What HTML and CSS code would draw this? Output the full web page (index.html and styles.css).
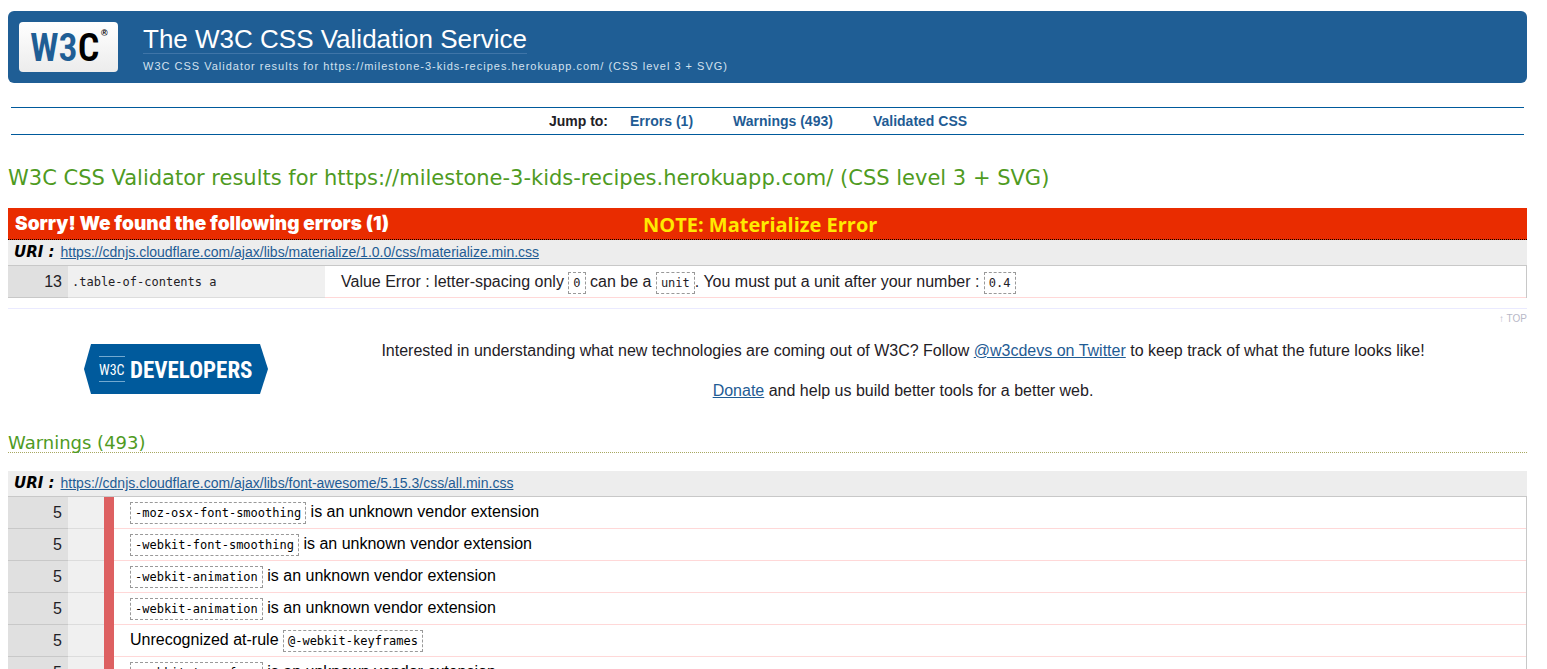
FILE: index.html
```html
<!DOCTYPE html>
<html lang="en">
<head>
<meta charset="utf-8">
<title>W3C CSS Validator results</title>
<link rel="stylesheet" href="styles.css">
</head>
<body>
<header class="banner" id="top">
  <a class="logo" href="#top" aria-label="W3C">
    <svg width="99" height="50" viewBox="0 0 99 50" aria-hidden="true">
      <text class="mark" x="11" y="39"><tspan class="mark-blue">W3</tspan><tspan>C</tspan></text>
      <text class="reg" x="82" y="14">®</text>
    </svg>
  </a>
  <div>
    <h1 class="title"><a href="#top">The W3C CSS Validation Service</a></h1>
    <p class="tagline">W3C CSS Validator results for https://milestone-3-kids-recipes.herokuapp.com/ (CSS level 3 + SVG)</p>
  </div>
</header>
<nav class="jump">
  <strong>Jump to:</strong>
  <a href="#errors">Errors (1)</a>
  <a href="#warnings">Warnings (493)</a>
  <a href="#css">Validated CSS</a>
</nav>
<main>
  <h2 class="results">W3C CSS Validator results for https://milestone-3-kids-recipes.herokuapp.com/ (CSS level 3 + SVG)</h2>
  <section id="errors">
    <div class="error-bar">
      <h3>Sorry! We found the following errors (1)</h3>
      <span class="note">NOTE: Materialize Error</span>
    </div>
    <h4 class="uri"><span>URI :</span><a href="#errors">https://cdnjs.cloudflare.com/ajax/libs/materialize/1.0.0/css/materialize.min.css</a></h4>
    <table class="report">
      <tr><td class="line">13</td><td class="context wide">.table-of-contents a</td><td class="message">Value Error : letter-spacing only <code>0</code> can be a <code>unit</code>. You must put a unit after your number : <code>0.4</code></td></tr>
    </table>
  </section>
  <p class="backtop"><a href="#top">↑ TOP</a></p>
  <section class="promo">
    <a class="developers" href="#top" aria-label="W3C Developers">
      <svg width="184" height="50" viewBox="0 0 184 50" aria-hidden="true">
        <path d="M7 0H176L184 25L176 50H7L0 25Z" fill="#005a9c"/>
        <path d="M15 12.5H41M15 37.500H41" stroke="#73a9d0"/>
        <text class="dev-w3c" x="15" y="31">W3C</text>
        <text class="dev-name" x="46" y="34">DEVELOPERS</text>
      </svg>
    </a>
    <div class="promo-text">
      <p>Interested in understanding what new technologies are coming out of W3C? Follow <a href="#twitter">@w3cdevs on Twitter</a> to keep track of what the future looks like!</p>
      <p><a href="#donate">Donate</a> and help us build better tools for a better web.</p>
    </div>
  </section>
  <section id="warnings">
    <h3 class="warnings-title">Warnings (493)</h3>
    <h4 class="uri"><span>URI :</span><a href="#warnings">https://cdnjs.cloudflare.com/ajax/libs/font-awesome/5.15.3/css/all.min.css</a></h4>
    <table class="report warn">
      <tr><td class="line">5</td><td class="context"></td><td class="level"></td><td class="message"><code>-moz-osx-font-smoothing</code> is an unknown vendor extension</td></tr>
      <tr><td class="line">5</td><td class="context"></td><td class="level"></td><td class="message"><code>-webkit-font-smoothing</code> is an unknown vendor extension</td></tr>
      <tr><td class="line">5</td><td class="context"></td><td class="level"></td><td class="message"><code>-webkit-animation</code> is an unknown vendor extension</td></tr>
      <tr><td class="line">5</td><td class="context"></td><td class="level"></td><td class="message"><code>-webkit-animation</code> is an unknown vendor extension</td></tr>
      <tr><td class="line">5</td><td class="context"></td><td class="level"></td><td class="message">Unrecognized at-rule <code>@-webkit-keyframes</code></td></tr>
      <tr><td class="line">5</td><td class="context"></td><td class="level"></td><td class="message"><code>-webkit-transform</code> is an unknown vendor extension</td></tr>
    </table>
  </section>
</main>
</body>
</html>
```
FILE: styles.css
```css
* { box-sizing: border-box; }
body {
  margin: 11px 20px 0 8px;
  background: #fff;
  color: #1f2126;
  font: 16px/24px "Liberation Sans", Arial, sans-serif;
}
h1, h2, h3, h4, p { margin: 0; font-weight: normal; }
a { color: #1f5c94; }

.banner {
  display: flex;
  gap: 25px;
  padding: 11px;
  border-radius: 6px;
  background: #1f5e95;
}
.logo {
  display: block;
  height: 50px;
  border-radius: 4px;
  background: linear-gradient(#fff, #ececec);
}
.logo svg, .developers svg { display: block; }
.mark { font: 600 38px "Roboto Condensed", "Liberation Sans", sans-serif; fill: #000; }
.mark-blue { fill: #1f5e95; }
.reg { font: bold 9px "Liberation Sans", sans-serif; }
.title { font-size: 26px; line-height: 28px; }
.title a {
  display: block;
  width: fit-content;
  padding-top: 3px;
  border-bottom: 1px solid #3f75a8;
  color: #fff;
  text-decoration: none;
}
.tagline {
  margin-top: 6px;
  color: #d3e1ef;
  font-size: 11px;
  line-height: 12px;
  letter-spacing: 1px;
}

.jump {
  display: flex;
  justify-content: center;
  margin: 24px 3px 0;
  padding: 0 19px 0 0;
  border: solid #005a9c;
  border-width: 1px 0;
  font-size: 14px;
  font-weight: bold;
  line-height: 26px;
}
.jump strong { margin-right: 22px; color: #1f2126; }
.jump a { margin-right: 40px; text-decoration: none; }
.jump a:last-child { margin-right: 0; }

.results {
  margin: 28px 0 15px;
  color: #4f9b1f;
  font: 21px/30px "DejaVu Sans", Verdana, sans-serif;
}
.error-bar {
  display: grid;
  grid-template-columns: 628px 1fr;
  align-items: center;
  height: 32px;
  padding-left: 7px;
  border-bottom: 1px dotted #000;
  background: #e92c00;
}
.error-bar h3 { color: #fff; font: 900 19px/30px "Inter", sans-serif; }
.note { padding-top: 2px; color: #ffea00; font: 700 20px/30px "Open Sans", sans-serif; }

.uri {
  display: flex;
  gap: 6px;
  padding-left: 6px;
  border-bottom: 1px solid #c8c8c8;
  background: #ededed;
  font-size: 14px;
  line-height: 25px;
}
.uri span { color: #000; font: italic bold 15px/25px "DejaVu Sans", sans-serif; }

.report { width: 100%; border-collapse: separate; border-spacing: 0; border-right: 1px solid #c8c8c8; }
.report td { height: 32px; padding: 0; }
.report .line {
  width: 60px;
  padding-right: 6px;
  border-bottom: 1px solid #c8c8c8;
  background: #e0e0e0;
  text-align: right;
}
.report .context {
  width: 36px;
  border-bottom: 1px solid #dcdcdc;
  background: #f0f0f0;
  font: 12px/20px "DejaVu Sans Mono", Consolas, monospace;
}
.report .wide { width: 257px; padding-left: 4px; }
.report .level { width: 10px; background: #dd6061; }
.report .message { padding-left: 16px; border-bottom: 1px solid #ffd8d8; }
.warn { color: #000; }
.warn .line { color: #1f2126; }
.warn .message { padding-bottom: 2px; }
code {
  padding: 3px 4px;
  border: 1px dashed #999;
  font: 12px/14px "DejaVu Sans Mono", Consolas, monospace;
}

.backtop {
  margin-top: 10px;
  border-top: 1px solid #eaeaff;
  font-size: 10px;
  line-height: 20px;
  text-align: right;
}
.backtop a { color: #b8b8c8; text-decoration: none; }

.promo { display: flex; align-items: flex-start; margin-top: 10px; }
.developers { width: 271px; padding: 5px 0 0 76px; }
.promo-text { flex: 1; text-align: center; }
.promo-text p { margin-bottom: 16px; }
.dev-w3c { fill: #fff; font: 14px "Roboto Condensed", "Liberation Sans", sans-serif; }
.dev-name { fill: #fff; font: bold 23px "Roboto Condensed", "Liberation Sans", sans-serif; }

.warnings-title {
  margin: 15px 0 18px;
  border-bottom: 1px dotted #a8a860;
  color: #4f9b1f;
  font: 18px/18px "DejaVu Sans", Verdana, sans-serif;
}
```
